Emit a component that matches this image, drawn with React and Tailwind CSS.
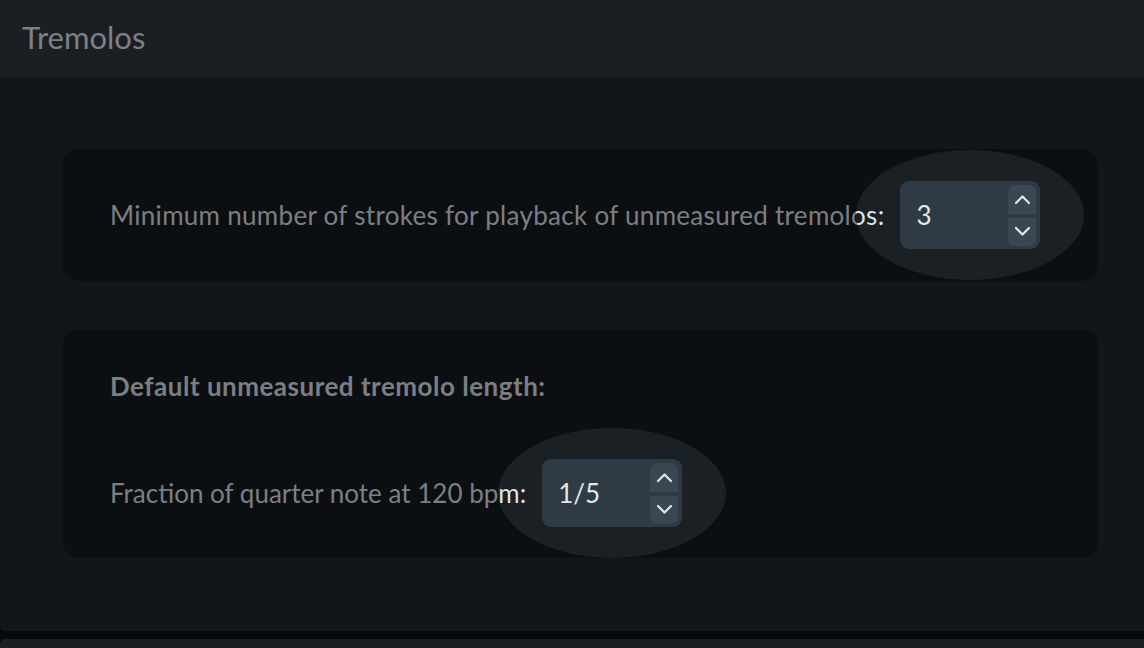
import { useState } from 'react'

const Chevron = ({ up }) => (
  <svg width="17" height="11" viewBox="0 0 17 11" fill="none">
    <path
      d={up ? 'M2 9 8.5 2.5 15 9' : 'M2 2l6.5 6.5L15 2'}
      stroke="#e3e6e8"
      strokeWidth="2.2"
      strokeLinecap="round"
      strokeLinejoin="round"
    />
  </svg>
)

function SpinBox({ value }) {
  return (
    <div className="relative ml-4 shrink-0">
      {/* focus spotlight */}
      <div className="absolute left-1/2 top-1/2 -translate-x-1/2 -translate-y-1/2 w-[228px] h-[130px] rounded-[50%] backdrop-brightness-[1.8] bg-white/[0.025]" />
      <div className="relative flex items-center w-[140px] h-[68px] rounded-[9px] bg-[#2e3a44] pl-[16px] pr-[4px]">
        <span className="flex-1 text-[26px] leading-none text-[#e4e6e8]">{value}</span>
        <div className="flex flex-col gap-[4px] w-[28px]">
          <button className="h-[29px] rounded-t-[7px] bg-[#3a4753] flex items-center justify-center">
            <Chevron up />
          </button>
          <button className="h-[28px] rounded-b-[7px] bg-[#3a4753] flex items-center justify-center">
            <Chevron />
          </button>
        </div>
      </div>
    </div>
  )
}

export default function App() {
  const [strokes] = useState('3')
  const [fraction] = useState('1/5')

  return (
    <div className="w-[1144px] h-[648px] bg-[#07090a] flex flex-col overflow-hidden font-['Lato',sans-serif]">
      <div className="h-[631px] shrink-0 bg-[#121619] rounded-bl-[5px] flex flex-col">
        <header className="h-[77px] bg-[#1b1f23] pl-[22px] flex items-center">
          <h1 className="text-[31px] text-[#7d8185] pb-[2px]">Tremolos</h1>
        </header>
        <main className="pt-[72px] pl-[63px] pr-[46px] flex flex-col gap-[48px]">
          <section className="h-[132px] rounded-[16px] bg-[#0c0f12] pl-[47px] flex items-center">
            <span className="text-[26px] tracking-[0.3px] text-[#7b7f84]">
              Minimum number of strokes for playback of unmeasured tremolos:
            </span>
            <SpinBox value={strokes} />
          </section>
          <section className="h-[229px] rounded-[16px] bg-[#0c0f12] pl-[47px] pt-[41px] flex flex-col">
            <h2 className="text-[26px] leading-[32px] tracking-[0.5px] font-bold text-[#7b7f84]">
              Default unmeasured tremolo length:
            </h2>
            <div className="mt-[57px] flex items-center">
              <span className="text-[26px] text-[#7b7f84]">Fraction of quarter note at 120 bpm:</span>
              <SpinBox value={fraction} />
            </div>
          </section>
        </main>
      </div>
      <div className="mt-[8px] flex-1 bg-[#1b1f23] rounded-tl-[5px]" />
    </div>
  )
}
